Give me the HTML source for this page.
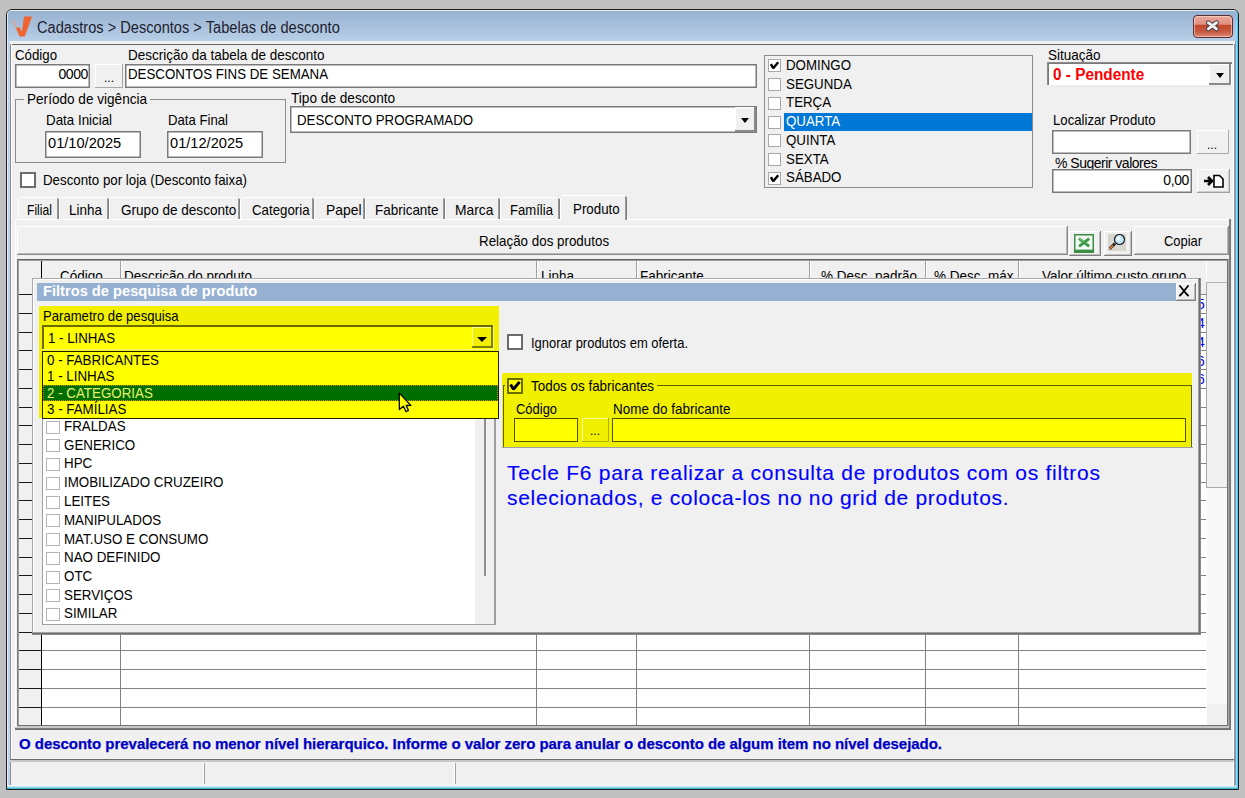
<!DOCTYPE html>
<html><head><meta charset="utf-8"><style>
html,body{margin:0;padding:0;width:1245px;height:798px;overflow:hidden;background:#c0c0c0}
.a{position:absolute}
.t{position:absolute;white-space:pre;font-family:"Liberation Sans",sans-serif;-webkit-font-smoothing:antialiased}
</style></head><body>
<div class="a" style="left:0px;top:0px;width:1245px;height:798px;background:#c0c0c0;"></div>
<div class="a" style="left:6px;top:9px;width:1233px;height:781px;box-sizing:border-box;border:1px solid #1c1c1c;border-radius:6px 6px 0 0;background:#b9d1ea;"></div>
<div class="a" style="left:7px;top:10px;width:1231px;height:779px;box-sizing:border-box;border-top:1px solid #e4ecf4;border-left:1px solid #dfe9f3;border-right:1px solid #3fc4ef;border-radius:5px 5px 0 0;"></div>
<div class="a" style="left:8px;top:11px;width:1229px;height:30px;background:linear-gradient(#97b1d0,#b8cfe8);border-radius:4px 4px 0 0;"></div>
<div class="a" style="left:1235px;top:41px;width:1px;height:745px;background:#8c96a0;"></div>
<div class="a" style="left:1236px;top:20px;width:1px;height:768px;background:#a0d0f0;"></div>
<div class="a" style="left:1237px;top:20px;width:1px;height:769px;background:#40d0ff;"></div>
<div class="a" style="left:1238px;top:20px;width:1px;height:769px;background:#102028;"></div>
<div class="a" style="left:7px;top:41px;width:1px;height:745px;background:#e4edf6;"></div>
<div class="a" style="left:8px;top:41px;width:1px;height:745px;background:#b9d1ea;"></div>
<div class="a" style="left:9px;top:41px;width:1px;height:745px;background:#c4d8ee;"></div>
<div class="a" style="left:7px;top:785px;width:1229px;height:1px;background:#fafafa;"></div>
<div class="a" style="left:7px;top:786px;width:1229px;height:1px;background:#c8e0f0;"></div>
<div class="a" style="left:7px;top:787px;width:1230px;height:1px;background:#90d8ee;"></div>
<div class="a" style="left:7px;top:788px;width:1231px;height:1px;background:#40b8d0;"></div>
<div class="a" style="left:10px;top:41px;width:1225px;height:744px;background:#f0f0f0;"></div>
<div class="a" style="left:10px;top:44px;width:1225px;height:1px;background:#646464;"></div>
<div class="a" style="left:10px;top:44px;width:1px;height:741px;background:#8a8a8a;"></div>
<div class="a" style="left:1233px;top:44px;width:1px;height:741px;background:#ffffff;"></div>
<div class="a" style="left:1234px;top:44px;width:1px;height:742px;background:#8a96a0;"></div>
<svg class="a" style="left:11px;top:15px" width="22" height="24" viewBox="0 0 22 24"><path d="M13 1.5 L21 1.5 L13.8 21.5 L8.5 21.5 L4.8 12.8 L8.6 12.2 L10.9 16.8 Z" fill="#ef6433"/><path d="M1.8 5.2 L5.2 12" stroke="#f39a78" stroke-width="1.3"/></svg>
<div class="t" style="left:37px;top:18px;font-size:16px;line-height:19px;color:#1e1e2e;letter-spacing:0px;transform:scaleX(0.9134);transform-origin:0 0;">Cadastros &gt; Descontos &gt; Tabelas de desconto</div>
<div class="a" style="left:1193px;top:15px;width:40px;height:23px;box-sizing:border-box;border:1px solid #5a2a35;border-radius:4px;background:linear-gradient(#eba89a 0%,#e09080 40%,#c0462a 42%,#c75a40 75%,#dc8a72 100%);box-shadow:inset 0 0 0 1px rgba(255,220,210,0.6);"></div>
<svg class="a" style="left:1204px;top:19px" width="18" height="15" viewBox="0 0 18 15"><path d="M4.3 3.7 L12.5 9.9 M12.5 3.7 L4.3 9.9" stroke="#3c3846" stroke-width="4.8" stroke-linecap="round"/><path d="M4.3 3.7 L12.5 9.9 M12.5 3.7 L4.3 9.9" stroke="#f2f2f2" stroke-width="2.9" stroke-linecap="round"/></svg>
<div class="t" style="left:15px;top:47px;font-size:14.5px;line-height:17px;color:#000;letter-spacing:0px;transform:scaleX(0.9153);transform-origin:0 0;">Código</div>
<div class="t" style="left:128px;top:46px;font-size:15px;line-height:18px;color:#000;letter-spacing:0px;transform:scaleX(0.8997);transform-origin:0 0;">Descrição da tabela de desconto</div>
<div class="a" style="left:15px;top:64px;width:75px;height:24px;background:#fff;box-sizing:border-box;border:1px solid #7a7a7a;box-shadow:inset 0 0 0 0.5px #7a7a7a;"></div>
<div class="t" style="left:28px;top:66px;width:60px;text-align:right;font-size:14px;line-height:17px;color:#000;letter-spacing:-0.4px;">0000</div>
<div class="a" style="left:95px;top:64px;width:28px;height:24px;background:#f0f0f0;"></div>
<div class="a" style="left:95px;top:64px;width:28px;height:1px;background:#fff;"></div>
<div class="a" style="left:95px;top:64px;width:1px;height:24px;background:#fff;"></div>
<div class="a" style="left:95px;top:87px;width:28px;height:1px;background:#a8a8a8;"></div>
<div class="a" style="left:122px;top:64px;width:1px;height:24px;background:#a8a8a8;"></div>
<div class="t" style="left:104px;top:71px;font-size:12px;line-height:14px;color:#000;letter-spacing:0px;">...</div>
<div class="a" style="left:125px;top:64px;width:632px;height:24px;background:#fff;box-sizing:border-box;border:1px solid #7a7a7a;box-shadow:inset 0 0 0 0.5px #7a7a7a;"></div>
<div class="t" style="left:128px;top:66px;font-size:14.5px;line-height:17px;color:#000;letter-spacing:0px;transform:scaleX(0.9174);transform-origin:0 0;">DESCONTOS FINS DE SEMANA</div>
<div class="a" style="left:15px;top:99px;width:271px;height:64px;box-sizing:border-box;border:1px solid #8c8c8c;"></div>
<div class="a" style="left:24px;top:93px;width:126px;height:11px;background:#f0f0f0;"></div>
<div class="t" style="left:27px;top:91px;font-size:14.5px;line-height:17px;color:#000;letter-spacing:0px;transform:scaleX(0.9369);transform-origin:0 0;">Período de vigência</div>
<div class="t" style="left:46px;top:112px;font-size:14.5px;line-height:17px;color:#000;letter-spacing:0px;transform:scaleX(0.921);transform-origin:0 0;">Data Inicial</div>
<div class="t" style="left:168px;top:112px;font-size:14.5px;line-height:17px;color:#000;letter-spacing:0px;transform:scaleX(0.9086);transform-origin:0 0;">Data Final</div>
<div class="a" style="left:45px;top:131px;width:96px;height:27px;background:#fff;box-sizing:border-box;border:1px solid #7a7a7a;box-shadow:inset 0 0 0 0.5px #7a7a7a;"></div>
<div class="t" style="left:48px;top:135px;font-size:14.5px;line-height:17px;color:#000;letter-spacing:0px;transform:scaleX(1.0081);transform-origin:0 0;">01/10/2025</div>
<div class="a" style="left:167px;top:131px;width:96px;height:27px;background:#fff;box-sizing:border-box;border:1px solid #7a7a7a;box-shadow:inset 0 0 0 0.5px #7a7a7a;"></div>
<div class="t" style="left:170px;top:135px;font-size:14.5px;line-height:17px;color:#000;letter-spacing:0px;transform:scaleX(1.0081);transform-origin:0 0;">01/12/2025</div>
<div class="t" style="left:291px;top:89px;font-size:15px;line-height:18px;color:#000;letter-spacing:0px;transform:scaleX(0.9088);transform-origin:0 0;">Tipo de desconto</div>
<div class="a" style="left:290px;top:106px;width:467px;height:27px;background:#fff;box-sizing:border-box;border:1px solid #7a7a7a;box-shadow:inset 0 0 0 0.5px #7a7a7a;"></div>
<div class="t" style="left:297px;top:111px;font-size:15px;line-height:18px;color:#000;letter-spacing:0px;transform:scaleX(0.8851);transform-origin:0 0;">DESCONTO PROGRAMADO</div>
<div class="a" style="left:735px;top:107px;width:21px;height:25px;background:#f0f0f0;"></div>
<div class="a" style="left:735px;top:107px;width:20px;height:1px;background:#ffffff;"></div>
<div class="a" style="left:735px;top:107px;width:1px;height:24px;background:#ffffff;"></div>
<div class="a" style="left:735px;top:130px;width:21px;height:2px;background:#8a8a8a;"></div>
<div class="a" style="left:754px;top:107px;width:2px;height:25px;background:#8a8a8a;"></div>
<div class="a" style="left:740.5px;top:117.5px;width:0;height:0;border-left:4.5px solid transparent;border-right:4.5px solid transparent;border-top:5px solid #000;"></div>
<div class="a" style="left:764px;top:55px;width:269px;height:133px;box-sizing:border-box;border:1px solid #8c8c8c;background:#f0f0f0;"></div>
<div class="a" style="left:768px;top:59px;width:13px;height:13px;background:#fff;box-sizing:border-box;border:1px solid #a8a8a8;"></div>
<svg class="a" style="left:768px;top:59px" width="13" height="13" viewBox="0 0 16 16"><path d="M3.6 6.4 L6.4 11.3 L12.6 3.9" fill="none" stroke="#000" stroke-width="3" stroke-linejoin="bevel"/></svg>
<div class="t" style="left:786px;top:57px;font-size:14.5px;line-height:17px;color:#000;letter-spacing:0px;transform:scaleX(0.9178);transform-origin:0 0;letter-spacing:0;transform:scaleX(0.9178);transform-origin:0 0;">DOMINGO</div>
<div class="a" style="left:768px;top:78px;width:13px;height:13px;background:#fff;box-sizing:border-box;border:1px solid #a8a8a8;"></div>
<div class="t" style="left:786px;top:76px;font-size:14.5px;line-height:17px;color:#000;letter-spacing:-0.4px;transform:scaleX(0.9178);transform-origin:0 0;letter-spacing:0;">SEGUNDA</div>
<div class="a" style="left:768px;top:97px;width:13px;height:13px;background:#fff;box-sizing:border-box;border:1px solid #a8a8a8;"></div>
<div class="t" style="left:786px;top:94px;font-size:14.5px;line-height:17px;color:#000;letter-spacing:-0.4px;transform:scaleX(0.9178);transform-origin:0 0;letter-spacing:0;">TERÇA</div>
<div class="a" style="left:784px;top:113px;width:248px;height:18px;background:#0078d7;"></div>
<div class="a" style="left:768px;top:116px;width:13px;height:13px;background:#fff;box-sizing:border-box;border:1px solid #a8a8a8;"></div>
<div class="t" style="left:786px;top:113px;font-size:14.5px;line-height:17px;color:#fff;letter-spacing:-0.4px;transform:scaleX(0.9178);transform-origin:0 0;letter-spacing:0;">QUARTA</div>
<div class="a" style="left:768px;top:134px;width:13px;height:13px;background:#fff;box-sizing:border-box;border:1px solid #a8a8a8;"></div>
<div class="t" style="left:786px;top:132px;font-size:14.5px;line-height:17px;color:#000;letter-spacing:-0.4px;transform:scaleX(0.9178);transform-origin:0 0;letter-spacing:0;">QUINTA</div>
<div class="a" style="left:768px;top:153px;width:13px;height:13px;background:#fff;box-sizing:border-box;border:1px solid #a8a8a8;"></div>
<div class="t" style="left:786px;top:151px;font-size:14.5px;line-height:17px;color:#000;letter-spacing:-0.4px;transform:scaleX(0.9178);transform-origin:0 0;letter-spacing:0;">SEXTA</div>
<div class="a" style="left:768px;top:172px;width:13px;height:13px;background:#fff;box-sizing:border-box;border:1px solid #a8a8a8;"></div>
<svg class="a" style="left:768px;top:172px" width="13" height="13" viewBox="0 0 16 16"><path d="M3.6 6.4 L6.4 11.3 L12.6 3.9" fill="none" stroke="#000" stroke-width="3" stroke-linejoin="bevel"/></svg>
<div class="t" style="left:786px;top:169px;font-size:14.5px;line-height:17px;color:#000;letter-spacing:-0.4px;transform:scaleX(0.9178);transform-origin:0 0;letter-spacing:0;">SÁBADO</div>
<div class="t" style="left:1048px;top:47px;font-size:14.5px;line-height:17px;color:#000;letter-spacing:0px;transform:scaleX(0.9317);transform-origin:0 0;">Situação</div>
<div class="a" style="left:1047px;top:62px;width:185px;height:24px;background:#ffffff;"></div>
<div class="a" style="left:1047px;top:62px;width:185px;height:1px;background:#8a8a8a;"></div>
<div class="a" style="left:1048px;top:63px;width:184px;height:1px;background:#7a7a7a;"></div>
<div class="a" style="left:1047px;top:62px;width:1px;height:24px;background:#8a8a8a;"></div>
<div class="a" style="left:1048px;top:63px;width:1px;height:22px;background:#7a7a7a;"></div>
<div class="a" style="left:1047px;top:85px;width:185px;height:1px;background:#f0f0f0;"></div>
<div class="a" style="left:1047px;top:86px;width:185px;height:1px;background:#e8e8e8;"></div>
<div class="t" style="left:1053px;top:65px;font-size:16px;line-height:19px;color:#ff0000;letter-spacing:0px;font-weight:bold;transform:scaleX(0.9589);transform-origin:0 0;">0 - Pendente</div>
<div class="a" style="left:1209px;top:64px;width:22px;height:21px;background:#f0f0f0;"></div>
<div class="a" style="left:1209px;top:64px;width:21px;height:1px;background:#ffffff;"></div>
<div class="a" style="left:1209px;top:64px;width:1px;height:20px;background:#ffffff;"></div>
<div class="a" style="left:1209px;top:83px;width:22px;height:2px;background:#8a8a8a;"></div>
<div class="a" style="left:1229px;top:64px;width:2px;height:21px;background:#8a8a8a;"></div>
<div class="a" style="left:1215.5px;top:72.5px;width:0;height:0;border-left:4.5px solid transparent;border-right:4.5px solid transparent;border-top:5px solid #000;"></div>
<div class="t" style="left:1053px;top:112px;font-size:14.5px;line-height:17px;color:#000;letter-spacing:0px;transform:scaleX(0.9088);transform-origin:0 0;">Localizar Produto</div>
<div class="a" style="left:1052px;top:130px;width:139px;height:24px;background:#fff;box-sizing:border-box;border:1px solid #7a7a7a;box-shadow:inset 0 0 0 0.5px #7a7a7a;"></div>
<div class="a" style="left:1197px;top:130px;width:32px;height:24px;background:#f0f0f0;"></div>
<div class="a" style="left:1197px;top:130px;width:32px;height:1px;background:#fff;"></div>
<div class="a" style="left:1197px;top:130px;width:1px;height:24px;background:#fff;"></div>
<div class="a" style="left:1197px;top:153px;width:32px;height:1px;background:#a8a8a8;"></div>
<div class="a" style="left:1228px;top:130px;width:1px;height:24px;background:#a8a8a8;"></div>
<div class="t" style="left:1207px;top:138px;font-size:12px;line-height:14px;color:#000;letter-spacing:0px;">...</div>
<div class="a" style="left:1052px;top:154px;width:160px;height:15px;overflow:hidden"><div class="t" style="left:3px;top:1px;font-size:14px;line-height:17px;letter-spacing:-0.5px">% Sugerir valores</div></div>
<div class="a" style="left:1052px;top:169px;width:140px;height:24px;background:#fff;box-sizing:border-box;border:1px solid #7a7a7a;box-shadow:inset 0 0 0 0.5px #7a7a7a;"></div>
<div class="t" style="left:1129px;top:172px;width:60px;text-align:right;font-size:14px;line-height:17px;color:#000;letter-spacing:-0.4px;">0,00</div>
<div class="a" style="left:1197px;top:169px;width:33px;height:24px;background:#f0f0f0;"></div>
<div class="a" style="left:1197px;top:169px;width:33px;height:1px;background:#fff;"></div>
<div class="a" style="left:1197px;top:169px;width:1px;height:24px;background:#fff;"></div>
<div class="a" style="left:1197px;top:192px;width:33px;height:1px;background:#a0a0a0;"></div>
<div class="a" style="left:1229px;top:169px;width:1px;height:24px;background:#a0a0a0;"></div>
<div class="a" style="left:1198px;top:191px;width:31px;height:1px;background:#d0d0d0;"></div>
<div class="a" style="left:1228px;top:170px;width:1px;height:22px;background:#d0d0d0;"></div>
<svg class="a" style="left:1203px;top:174px" width="22" height="14" viewBox="0 0 22 14"><path d="M1 7 H7 M5 3 L9 7 L5 11" fill="none" stroke="#000" stroke-width="2.6"/><path d="M11 1.5 H16.5 L20 5 V13 H11 Z" fill="#fff" stroke="#000" stroke-width="1.6"/></svg>
<div class="a" style="left:20px;top:172px;width:16px;height:16px;background:#fff;box-sizing:border-box;border:2px solid #6a6a6a;"></div>
<div class="t" style="left:43px;top:172px;font-size:14.5px;line-height:17px;color:#000;letter-spacing:0px;transform:scaleX(0.9173);transform-origin:0 0;">Desconto por loja (Desconto faixa)</div>
<div class="a" style="left:18px;top:197px;width:41px;height:22px;background:#f0f0f0;"></div>
<div class="a" style="left:20px;top:197px;width:37px;height:1px;background:#ffffff;"></div>
<div class="a" style="left:18px;top:199px;width:1px;height:20px;background:#ffffff;"></div>
<div class="a" style="left:57px;top:198px;width:1px;height:21px;background:#9a9a9a;"></div>
<div class="a" style="left:58px;top:199px;width:1px;height:20px;background:#7e7e7e;"></div>
<div class="t" style="left:27px;top:202px;font-size:14.5px;line-height:17px;color:#000;letter-spacing:0px;transform:scaleX(0.8341);transform-origin:0 0;">Filial</div>
<div class="a" style="left:59px;top:197px;width:50px;height:22px;background:#f0f0f0;"></div>
<div class="a" style="left:61px;top:197px;width:46px;height:1px;background:#ffffff;"></div>
<div class="a" style="left:59px;top:199px;width:1px;height:20px;background:#ffffff;"></div>
<div class="a" style="left:107px;top:198px;width:1px;height:21px;background:#9a9a9a;"></div>
<div class="a" style="left:108px;top:199px;width:1px;height:20px;background:#7e7e7e;"></div>
<div class="t" style="left:69px;top:202px;font-size:14.5px;line-height:17px;color:#000;letter-spacing:0px;transform:scaleX(0.9265);transform-origin:0 0;">Linha</div>
<div class="a" style="left:109px;top:197px;width:131px;height:22px;background:#f0f0f0;"></div>
<div class="a" style="left:111px;top:197px;width:127px;height:1px;background:#ffffff;"></div>
<div class="a" style="left:109px;top:199px;width:1px;height:20px;background:#ffffff;"></div>
<div class="a" style="left:238px;top:198px;width:1px;height:21px;background:#9a9a9a;"></div>
<div class="a" style="left:239px;top:199px;width:1px;height:20px;background:#7e7e7e;"></div>
<div class="t" style="left:121px;top:202px;font-size:14.5px;line-height:17px;color:#000;letter-spacing:0px;transform:scaleX(0.9347);transform-origin:0 0;">Grupo de desconto</div>
<div class="a" style="left:240px;top:197px;width:74px;height:22px;background:#f0f0f0;"></div>
<div class="a" style="left:242px;top:197px;width:70px;height:1px;background:#ffffff;"></div>
<div class="a" style="left:240px;top:199px;width:1px;height:20px;background:#ffffff;"></div>
<div class="a" style="left:312px;top:198px;width:1px;height:21px;background:#9a9a9a;"></div>
<div class="a" style="left:313px;top:199px;width:1px;height:20px;background:#7e7e7e;"></div>
<div class="t" style="left:252px;top:202px;font-size:14.5px;line-height:17px;color:#000;letter-spacing:0px;transform:scaleX(0.9155);transform-origin:0 0;">Categoria</div>
<div class="a" style="left:314px;top:197px;width:51px;height:22px;background:#f0f0f0;"></div>
<div class="a" style="left:316px;top:197px;width:47px;height:1px;background:#ffffff;"></div>
<div class="a" style="left:314px;top:199px;width:1px;height:20px;background:#ffffff;"></div>
<div class="a" style="left:363px;top:198px;width:1px;height:21px;background:#9a9a9a;"></div>
<div class="a" style="left:364px;top:199px;width:1px;height:20px;background:#7e7e7e;"></div>
<div class="t" style="left:326px;top:202px;font-size:14.5px;line-height:17px;color:#000;letter-spacing:0px;transform:scaleX(0.9573);transform-origin:0 0;">Papel</div>
<div class="a" style="left:365px;top:197px;width:80px;height:22px;background:#f0f0f0;"></div>
<div class="a" style="left:367px;top:197px;width:76px;height:1px;background:#ffffff;"></div>
<div class="a" style="left:365px;top:199px;width:1px;height:20px;background:#ffffff;"></div>
<div class="a" style="left:443px;top:198px;width:1px;height:21px;background:#9a9a9a;"></div>
<div class="a" style="left:444px;top:199px;width:1px;height:20px;background:#7e7e7e;"></div>
<div class="t" style="left:375px;top:202px;font-size:14.5px;line-height:17px;color:#000;letter-spacing:0px;transform:scaleX(0.9279);transform-origin:0 0;">Fabricante</div>
<div class="a" style="left:445px;top:197px;width:55px;height:22px;background:#f0f0f0;"></div>
<div class="a" style="left:447px;top:197px;width:51px;height:1px;background:#ffffff;"></div>
<div class="a" style="left:445px;top:199px;width:1px;height:20px;background:#ffffff;"></div>
<div class="a" style="left:498px;top:198px;width:1px;height:21px;background:#9a9a9a;"></div>
<div class="a" style="left:499px;top:199px;width:1px;height:20px;background:#7e7e7e;"></div>
<div class="t" style="left:455px;top:202px;font-size:14.5px;line-height:17px;color:#000;letter-spacing:0px;transform:scaleX(0.9531);transform-origin:0 0;">Marca</div>
<div class="a" style="left:500px;top:197px;width:60px;height:22px;background:#f0f0f0;"></div>
<div class="a" style="left:502px;top:197px;width:56px;height:1px;background:#ffffff;"></div>
<div class="a" style="left:500px;top:199px;width:1px;height:20px;background:#ffffff;"></div>
<div class="a" style="left:558px;top:198px;width:1px;height:21px;background:#9a9a9a;"></div>
<div class="a" style="left:559px;top:199px;width:1px;height:20px;background:#7e7e7e;"></div>
<div class="t" style="left:510px;top:202px;font-size:14.5px;line-height:17px;color:#000;letter-spacing:0px;transform:scaleX(0.9033);transform-origin:0 0;">Família</div>
<div class="a" style="left:560px;top:195px;width:67px;height:26px;background:#f0f0f0;"></div>
<div class="a" style="left:562px;top:195px;width:63px;height:1px;background:#ffffff;"></div>
<div class="a" style="left:560px;top:197px;width:1px;height:23px;background:#ffffff;"></div>
<div class="a" style="left:625px;top:196px;width:1px;height:24px;background:#9a9a9a;"></div>
<div class="a" style="left:626px;top:197px;width:1px;height:23px;background:#7e7e7e;"></div>
<div class="t" style="left:573px;top:201px;font-size:14.5px;line-height:17px;color:#000;letter-spacing:0px;transform:scaleX(0.9187);transform-origin:0 0;">Produto</div>
<div class="a" style="left:15px;top:219px;width:545px;height:1px;background:#ffffff;"></div>
<div class="a" style="left:627px;top:219px;width:602px;height:1px;background:#ffffff;"></div>
<div class="a" style="left:15px;top:219px;width:1px;height:510px;background:#ffffff;"></div>
<div class="a" style="left:1229px;top:219px;width:1px;height:511px;background:#8a8a8a;"></div>
<div class="a" style="left:1230px;top:219px;width:1px;height:511px;background:#6e6e6e;"></div>
<div class="a" style="left:15px;top:728px;width:1216px;height:1px;background:#b0b0b0;"></div>
<div class="a" style="left:15px;top:729px;width:1216px;height:1px;background:#6e6e6e;"></div>
<div class="a" style="left:17px;top:226px;width:1051px;height:29px;background:#f0f0f0;"></div>
<div class="a" style="left:17px;top:226px;width:1051px;height:1px;background:#fff;"></div>
<div class="a" style="left:17px;top:226px;width:1px;height:29px;background:#fff;"></div>
<div class="a" style="left:17px;top:254px;width:1051px;height:1px;background:#8a8a8a;"></div>
<div class="a" style="left:1067px;top:226px;width:1px;height:29px;background:#8a8a8a;"></div>
<div class="a" style="left:18px;top:253px;width:1049px;height:1px;background:#b8b8b8;"></div>
<div class="a" style="left:1066px;top:227px;width:1px;height:27px;background:#b8b8b8;"></div>
<div class="t" style="left:479px;top:233px;font-size:14.5px;line-height:17px;color:#000;letter-spacing:0px;transform:scaleX(0.922);transform-origin:0 0;">Relação dos produtos</div>
<div class="a" style="left:1069px;top:231px;width:32px;height:25px;background:#f0f0f0;"></div>
<div class="a" style="left:1069px;top:231px;width:32px;height:1px;background:#fff;"></div>
<div class="a" style="left:1069px;top:231px;width:1px;height:25px;background:#fff;"></div>
<div class="a" style="left:1069px;top:255px;width:32px;height:1px;background:#808080;"></div>
<div class="a" style="left:1100px;top:231px;width:1px;height:25px;background:#808080;"></div>
<div class="a" style="left:1070px;top:254px;width:30px;height:1px;background:#c0c0c0;"></div>
<div class="a" style="left:1099px;top:232px;width:1px;height:23px;background:#c0c0c0;"></div>
<div class="a" style="left:1104px;top:231px;width:28px;height:25px;background:#f0f0f0;"></div>
<div class="a" style="left:1104px;top:231px;width:28px;height:1px;background:#fff;"></div>
<div class="a" style="left:1104px;top:231px;width:1px;height:25px;background:#fff;"></div>
<div class="a" style="left:1104px;top:255px;width:28px;height:1px;background:#808080;"></div>
<div class="a" style="left:1131px;top:231px;width:1px;height:25px;background:#808080;"></div>
<div class="a" style="left:1105px;top:254px;width:26px;height:1px;background:#c0c0c0;"></div>
<div class="a" style="left:1130px;top:232px;width:1px;height:23px;background:#c0c0c0;"></div>
<div class="a" style="left:1134px;top:226px;width:95px;height:29px;background:#f0f0f0;"></div>
<div class="a" style="left:1134px;top:226px;width:95px;height:1px;background:#fff;"></div>
<div class="a" style="left:1134px;top:226px;width:1px;height:29px;background:#fff;"></div>
<div class="a" style="left:1134px;top:254px;width:95px;height:1px;background:#8a8a8a;"></div>
<div class="a" style="left:1228px;top:226px;width:1px;height:29px;background:#8a8a8a;"></div>
<div class="a" style="left:1135px;top:253px;width:93px;height:1px;background:#b8b8b8;"></div>
<div class="a" style="left:1227px;top:227px;width:1px;height:27px;background:#b8b8b8;"></div>
<div class="t" style="left:1164px;top:233px;font-size:14.5px;line-height:17px;color:#000;letter-spacing:0px;transform:scaleX(0.8903);transform-origin:0 0;">Copiar</div>
<svg class="a" style="left:1074px;top:234px" width="20" height="19" viewBox="0 0 20 19"><rect x="0.75" y="0.75" width="18.5" height="17.5" fill="#f2f8f2" stroke="#3d8c47" stroke-width="1.5"/><rect x="1" y="15.6" width="18" height="3" fill="#3d8c47"/><path d="M5 4.6 L15.2 12.4 M15.2 4.6 L5 12.4" stroke="#3a9c46" stroke-width="2.9"/><path d="M6 4.8 L9.5 7.6" stroke="#9ad4a2" stroke-width="0.9"/></svg>
<svg class="a" style="left:1108px;top:234px" width="18" height="17" viewBox="0 0 18 17"><rect x="0" y="0" width="18" height="17" fill="#d9d5cf"/><path d="M1.5 15 L7 9.5" stroke="#222" stroke-width="2.8"/><path d="M1.5 15 L5 11.5" stroke="#f08a3a" stroke-width="1.6"/><circle cx="11.5" cy="5.5" r="5" fill="#bfe6fb" stroke="#1b1b1b" stroke-width="1.2"/><circle cx="10.5" cy="4.5" r="2.3" fill="#eefaff"/></svg>
<div class="a" style="left:17px;top:259px;width:1210px;height:466px;background:#ffffff;"></div>
<div class="a" style="left:19px;top:260px;width:1208px;height:34px;background:#f0f0f0;"></div>
<div class="a" style="left:19px;top:294px;width:22px;height:431px;background:#f0f0f0;"></div>
<div class="a" style="left:41px;top:260px;width:1px;height:465px;background:#000000;"></div>
<div class="a" style="left:120px;top:260px;width:1px;height:34px;background:#a0a0a0;"></div>
<div class="a" style="left:121px;top:260px;width:1px;height:34px;background:#ffffff;"></div>
<div class="a" style="left:536px;top:260px;width:1px;height:34px;background:#a0a0a0;"></div>
<div class="a" style="left:537px;top:260px;width:1px;height:34px;background:#ffffff;"></div>
<div class="a" style="left:636px;top:260px;width:1px;height:34px;background:#a0a0a0;"></div>
<div class="a" style="left:637px;top:260px;width:1px;height:34px;background:#ffffff;"></div>
<div class="a" style="left:809px;top:260px;width:1px;height:34px;background:#a0a0a0;"></div>
<div class="a" style="left:810px;top:260px;width:1px;height:34px;background:#ffffff;"></div>
<div class="a" style="left:925px;top:260px;width:1px;height:34px;background:#a0a0a0;"></div>
<div class="a" style="left:926px;top:260px;width:1px;height:34px;background:#ffffff;"></div>
<div class="a" style="left:1018px;top:260px;width:1px;height:34px;background:#a0a0a0;"></div>
<div class="a" style="left:1019px;top:260px;width:1px;height:34px;background:#ffffff;"></div>
<div class="a" style="left:1206px;top:260px;width:1px;height:21px;background:#ffffff;"></div>
<div class="a" style="left:19px;top:294px;width:1187px;height:1px;background:#a0a0a0;"></div>
<div class="a" style="left:19px;top:294px;width:22px;height:1px;background:#1a1a1a;"></div>
<div class="a" style="left:42px;top:294px;width:1164px;height:1px;background:#828282;"></div>
<div class="a" style="left:19px;top:313px;width:22px;height:1px;background:#1a1a1a;"></div>
<div class="a" style="left:42px;top:313px;width:1164px;height:1px;background:#828282;"></div>
<div class="a" style="left:19px;top:332px;width:22px;height:1px;background:#1a1a1a;"></div>
<div class="a" style="left:42px;top:332px;width:1164px;height:1px;background:#828282;"></div>
<div class="a" style="left:19px;top:350px;width:22px;height:1px;background:#1a1a1a;"></div>
<div class="a" style="left:42px;top:350px;width:1164px;height:1px;background:#828282;"></div>
<div class="a" style="left:19px;top:369px;width:22px;height:1px;background:#1a1a1a;"></div>
<div class="a" style="left:42px;top:369px;width:1164px;height:1px;background:#828282;"></div>
<div class="a" style="left:19px;top:388px;width:22px;height:1px;background:#1a1a1a;"></div>
<div class="a" style="left:42px;top:388px;width:1164px;height:1px;background:#828282;"></div>
<div class="a" style="left:19px;top:407px;width:22px;height:1px;background:#1a1a1a;"></div>
<div class="a" style="left:42px;top:407px;width:1164px;height:1px;background:#828282;"></div>
<div class="a" style="left:19px;top:425px;width:22px;height:1px;background:#1a1a1a;"></div>
<div class="a" style="left:42px;top:425px;width:1164px;height:1px;background:#828282;"></div>
<div class="a" style="left:19px;top:444px;width:22px;height:1px;background:#1a1a1a;"></div>
<div class="a" style="left:42px;top:444px;width:1164px;height:1px;background:#828282;"></div>
<div class="a" style="left:19px;top:463px;width:22px;height:1px;background:#1a1a1a;"></div>
<div class="a" style="left:42px;top:463px;width:1164px;height:1px;background:#828282;"></div>
<div class="a" style="left:19px;top:482px;width:22px;height:1px;background:#1a1a1a;"></div>
<div class="a" style="left:42px;top:482px;width:1164px;height:1px;background:#828282;"></div>
<div class="a" style="left:19px;top:500px;width:22px;height:1px;background:#1a1a1a;"></div>
<div class="a" style="left:42px;top:500px;width:1164px;height:1px;background:#828282;"></div>
<div class="a" style="left:19px;top:519px;width:22px;height:1px;background:#1a1a1a;"></div>
<div class="a" style="left:42px;top:519px;width:1164px;height:1px;background:#828282;"></div>
<div class="a" style="left:19px;top:538px;width:22px;height:1px;background:#1a1a1a;"></div>
<div class="a" style="left:42px;top:538px;width:1164px;height:1px;background:#828282;"></div>
<div class="a" style="left:19px;top:557px;width:22px;height:1px;background:#1a1a1a;"></div>
<div class="a" style="left:42px;top:557px;width:1164px;height:1px;background:#828282;"></div>
<div class="a" style="left:19px;top:575px;width:22px;height:1px;background:#1a1a1a;"></div>
<div class="a" style="left:42px;top:575px;width:1164px;height:1px;background:#828282;"></div>
<div class="a" style="left:19px;top:594px;width:22px;height:1px;background:#1a1a1a;"></div>
<div class="a" style="left:42px;top:594px;width:1164px;height:1px;background:#828282;"></div>
<div class="a" style="left:19px;top:613px;width:22px;height:1px;background:#1a1a1a;"></div>
<div class="a" style="left:42px;top:613px;width:1164px;height:1px;background:#828282;"></div>
<div class="a" style="left:19px;top:632px;width:22px;height:1px;background:#1a1a1a;"></div>
<div class="a" style="left:42px;top:632px;width:1164px;height:1px;background:#828282;"></div>
<div class="a" style="left:19px;top:650px;width:22px;height:1px;background:#1a1a1a;"></div>
<div class="a" style="left:42px;top:650px;width:1164px;height:1px;background:#828282;"></div>
<div class="a" style="left:19px;top:669px;width:22px;height:1px;background:#1a1a1a;"></div>
<div class="a" style="left:42px;top:669px;width:1164px;height:1px;background:#828282;"></div>
<div class="a" style="left:19px;top:688px;width:22px;height:1px;background:#1a1a1a;"></div>
<div class="a" style="left:42px;top:688px;width:1164px;height:1px;background:#828282;"></div>
<div class="a" style="left:19px;top:707px;width:22px;height:1px;background:#1a1a1a;"></div>
<div class="a" style="left:42px;top:707px;width:1164px;height:1px;background:#828282;"></div>
<div class="a" style="left:120px;top:294px;width:1px;height:431px;background:#828282;"></div>
<div class="a" style="left:536px;top:294px;width:1px;height:431px;background:#828282;"></div>
<div class="a" style="left:636px;top:294px;width:1px;height:431px;background:#828282;"></div>
<div class="a" style="left:809px;top:294px;width:1px;height:431px;background:#828282;"></div>
<div class="a" style="left:925px;top:294px;width:1px;height:431px;background:#828282;"></div>
<div class="a" style="left:1018px;top:294px;width:1px;height:431px;background:#828282;"></div>
<div class="t" style="left:60px;top:268px;font-size:14.5px;line-height:17px;color:#000;letter-spacing:-0.4px;transform:scaleX(0.9293);transform-origin:0 0;letter-spacing:0;">Código</div>
<div class="t" style="left:124px;top:268px;font-size:14.5px;line-height:17px;color:#000;letter-spacing:-0.4px;transform:scaleX(0.9293);transform-origin:0 0;letter-spacing:0;">Descrição do produto</div>
<div class="t" style="left:541px;top:268px;font-size:14.5px;line-height:17px;color:#000;letter-spacing:-0.4px;transform:scaleX(0.9293);transform-origin:0 0;letter-spacing:0;">Linha</div>
<div class="t" style="left:640px;top:268px;font-size:14.5px;line-height:17px;color:#000;letter-spacing:-0.4px;transform:scaleX(0.9293);transform-origin:0 0;letter-spacing:0;">Fabricante</div>
<div class="t" style="left:821px;top:268px;font-size:14.5px;line-height:17px;color:#000;letter-spacing:-0.4px;transform:scaleX(0.9293);transform-origin:0 0;letter-spacing:0;">% Desc. padrão</div>
<div class="t" style="left:934px;top:268px;font-size:14.5px;line-height:17px;color:#000;letter-spacing:-0.4px;transform:scaleX(0.9293);transform-origin:0 0;letter-spacing:0;">% Desc. máx</div>
<div class="t" style="left:1042px;top:268px;font-size:14.5px;line-height:17px;color:#000;letter-spacing:-0.4px;transform:scaleX(0.9293);transform-origin:0 0;letter-spacing:0;">Valor último custo grupo</div>
<div class="a" style="left:1206px;top:281px;width:21px;height:207px;background:#f0f0f0;"></div>
<div class="a" style="left:1206px;top:282px;width:1px;height:206px;background:#a8a8a8;"></div>
<div class="a" style="left:1206px;top:487px;width:21px;height:1px;background:#a8a8a8;"></div>
<div class="a" style="left:1206px;top:282px;width:21px;height:1px;background:#b4b4b4;"></div>
<div class="a" style="left:1207px;top:488px;width:20px;height:216px;background-color:#f4f4f4;background-image:linear-gradient(45deg,#fcfcfc 25%,transparent 25%,transparent 75%,#fcfcfc 75%),linear-gradient(45deg,#fcfcfc 25%,transparent 25%,transparent 75%,#fcfcfc 75%);background-size:2px 2px;background-position:0 0,1px 1px;"></div>
<div class="a" style="left:1207px;top:704px;width:20px;height:21px;background:#f0f0f0;"></div>
<div class="a" style="left:17px;top:259px;width:1210px;height:1px;background:#606060;"></div>
<div class="a" style="left:19px;top:260px;width:1208px;height:1px;background:#a0a0a0;"></div>
<div class="a" style="left:17px;top:259px;width:1px;height:467px;background:#7a7a7a;"></div>
<div class="a" style="left:18px;top:260px;width:1px;height:465px;background:#a0a0a0;"></div>
<div class="a" style="left:1227px;top:259px;width:1px;height:467px;background:#707070;"></div>
<div class="a" style="left:1228px;top:259px;width:1px;height:468px;background:#a8a8a8;"></div>
<div class="a" style="left:1229px;top:219px;width:1px;height:511px;background:#808080;"></div>
<div class="a" style="left:1230px;top:219px;width:1px;height:511px;background:#787878;"></div>
<div class="a" style="left:17px;top:725px;width:1211px;height:1px;background:#707070;"></div>
<div class="a" style="left:17px;top:726px;width:1212px;height:1px;background:#c8c8c8;"></div>
<div class="a" style="left:15px;top:727px;width:1214px;height:1px;background:#c8c8c8;"></div>
<div class="a" style="left:15px;top:728px;width:1216px;height:1px;background:#7a7a7a;"></div>
<div class="a" style="left:15px;top:729px;width:1216px;height:1px;background:#707070;"></div>
<div class="t" style="left:1197px;top:296px;font-size:14px;line-height:17px;color:#0000ff;letter-spacing:0px;">5</div>
<div class="t" style="left:1197px;top:315px;font-size:14px;line-height:17px;color:#0000ff;letter-spacing:0px;">4</div>
<div class="t" style="left:1197px;top:334px;font-size:14px;line-height:17px;color:#0000ff;letter-spacing:0px;">4</div>
<div class="t" style="left:1197px;top:353px;font-size:14px;line-height:17px;color:#0000ff;letter-spacing:0px;">6</div>
<div class="t" style="left:1197px;top:371px;font-size:14px;line-height:17px;color:#0000ff;letter-spacing:0px;">6</div>
<div class="a" style="left:32px;top:278px;width:1169px;height:357px;background:#f0f0f0;"></div>
<div class="a" style="left:32px;top:278px;width:1169px;height:1px;background:#a8a8a8;"></div>
<div class="a" style="left:32px;top:278px;width:1px;height:357px;background:#a8a8a8;"></div>
<div class="a" style="left:33px;top:279px;width:1166px;height:1px;background:#ffffff;"></div>
<div class="a" style="left:33px;top:279px;width:1px;height:354px;background:#ffffff;"></div>
<div class="a" style="left:1198px;top:279px;width:1px;height:355px;background:#a0a0a0;"></div>
<div class="a" style="left:1199px;top:278px;width:1px;height:357px;background:#6e6e6e;"></div>
<div class="a" style="left:1200px;top:278px;width:1px;height:357px;background:#8a8a8a;"></div>
<div class="a" style="left:33px;top:632px;width:1166px;height:1px;background:#a0a0a0;"></div>
<div class="a" style="left:32px;top:633px;width:1169px;height:1px;background:#6e6e6e;"></div>
<div class="a" style="left:32px;top:634px;width:1169px;height:1px;background:#8a8a8a;"></div>
<div class="a" style="left:37px;top:283px;width:1139px;height:18px;background:#97b1d2;"></div>
<div class="t" style="left:43px;top:282px;font-size:15px;line-height:18px;color:#ffffff;letter-spacing:0px;font-weight:bold;transform:scaleX(0.9771);transform-origin:0 0;">Filtros de pesquisa de produto</div>
<div class="a" style="left:1176px;top:283px;width:20px;height:18px;background:#f0f0f0;"></div>
<div class="a" style="left:1176px;top:283px;width:20px;height:1px;background:#ffffff;"></div>
<div class="a" style="left:1176px;top:283px;width:1px;height:18px;background:#ffffff;"></div>
<div class="a" style="left:1176px;top:300px;width:20px;height:1px;background:#808080;"></div>
<div class="a" style="left:1195px;top:283px;width:1px;height:18px;background:#808080;"></div>
<div class="a" style="left:1177px;top:299px;width:18px;height:1px;background:#b8b8b8;"></div>
<div class="a" style="left:1194px;top:284px;width:1px;height:16px;background:#b8b8b8;"></div>
<svg class="a" style="left:1179px;top:285px" width="12" height="12" viewBox="0 0 12 12"><path d="M1 1 Q3.5 4 5 6 Q6.5 4 9 1 M1 10.5 Q3.5 8 5 6 Q6.5 8 9 10.5" fill="none" stroke="#000" stroke-width="1.8" stroke-linecap="round"/></svg>
<div class="a" style="left:39px;top:306px;width:460px;height:112px;background:#f0f000;"></div>
<div class="t" style="left:43px;top:308px;font-size:14.5px;line-height:17px;color:#000;letter-spacing:0px;transform:scaleX(0.9041);transform-origin:0 0;">Parametro de pesquisa</div>
<div class="a" style="left:42px;top:325px;width:452px;height:25px;background:#ffff00;"></div>
<div class="a" style="left:42px;top:325px;width:452px;height:2px;background:#6b6b00;"></div>
<div class="a" style="left:42px;top:325px;width:2px;height:25px;background:#6b6b00;"></div>
<div class="a" style="left:42px;top:349px;width:452px;height:1px;background:#f8f880;"></div>
<div class="a" style="left:493px;top:325px;width:1px;height:25px;background:#f8f880;"></div>
<div class="t" style="left:48px;top:330px;font-size:14.5px;line-height:17px;color:#000;letter-spacing:0px;transform:scaleX(0.9143);transform-origin:0 0;">1 - LINHAS</div>
<div class="a" style="left:472px;top:327px;width:21px;height:21px;background:#f0f000;"></div>
<div class="a" style="left:472px;top:327px;width:21px;height:1px;background:#ffff90;"></div>
<div class="a" style="left:472px;top:327px;width:1px;height:21px;background:#ffff90;"></div>
<div class="a" style="left:472px;top:346px;width:21px;height:2px;background:#808000;"></div>
<div class="a" style="left:491px;top:327px;width:2px;height:21px;background:#808000;"></div>
<div class="a" style="left:477.0px;top:336.5px;width:0;height:0;border-left:5.0px solid transparent;border-right:5.0px solid transparent;border-top:5px solid #000;"></div>
<div class="a" style="left:42px;top:351px;width:457px;height:68px;background:#ffff00;box-sizing:border-box;border:1px solid #202000;"></div>
<div class="t" style="left:47px;top:352px;font-size:14.5px;line-height:17px;color:#000;letter-spacing:-0.4px;transform:scaleX(0.9206);transform-origin:0 0;letter-spacing:0;">0 - FABRICANTES</div>
<div class="t" style="left:47px;top:368px;font-size:14.5px;line-height:17px;color:#000;letter-spacing:-0.4px;transform:scaleX(0.9206);transform-origin:0 0;letter-spacing:0;">1 - LINHAS</div>
<div class="a" style="left:43px;top:385px;width:455px;height:16px;background:#006f00;box-sizing:border-box;border:1px dotted #d08a10;"></div>
<div class="t" style="left:47px;top:385px;font-size:14.5px;line-height:17px;color:#e8f070;letter-spacing:-0.4px;transform:scaleX(0.9206);transform-origin:0 0;letter-spacing:0;">2 - CATEGORIAS</div>
<div class="t" style="left:47px;top:401px;font-size:14.5px;line-height:17px;color:#000;letter-spacing:-0.4px;transform:scaleX(0.9206);transform-origin:0 0;letter-spacing:0;">3 - FAMÍLIAS</div>
<div class="a" style="left:42px;top:419px;width:454px;height:206px;background:#ffffff;"></div>
<div class="a" style="left:42px;top:419px;width:1px;height:206px;background:#a0a0a0;"></div>
<div class="a" style="left:494px;top:419px;width:2px;height:206px;background:#a0a0a0;"></div>
<div class="a" style="left:42px;top:624px;width:454px;height:1px;background:#a0a0a0;"></div>
<div class="a" style="left:475px;top:419px;width:19px;height:205px;background:#f0f0f0;"></div>
<div class="a" style="left:484px;top:419px;width:2px;height:157px;background:#8f8f8f;"></div>
<div class="a" style="left:46px;top:421px;width:14px;height:13px;background:#fff;box-sizing:border-box;border:1px solid #b4b4b4;"></div>
<div class="t" style="left:64px;top:418px;font-size:14.5px;line-height:17px;color:#000;letter-spacing:-0.4px;transform:scaleX(0.9206);transform-origin:0 0;letter-spacing:0;">FRALDAS</div>
<div class="a" style="left:46px;top:439px;width:14px;height:13px;background:#fff;box-sizing:border-box;border:1px solid #b4b4b4;"></div>
<div class="t" style="left:64px;top:437px;font-size:14.5px;line-height:17px;color:#000;letter-spacing:-0.4px;transform:scaleX(0.9206);transform-origin:0 0;letter-spacing:0;">GENERICO</div>
<div class="a" style="left:46px;top:458px;width:14px;height:13px;background:#fff;box-sizing:border-box;border:1px solid #b4b4b4;"></div>
<div class="t" style="left:64px;top:455px;font-size:14.5px;line-height:17px;color:#000;letter-spacing:-0.4px;transform:scaleX(0.9206);transform-origin:0 0;letter-spacing:0;">HPC</div>
<div class="a" style="left:46px;top:477px;width:14px;height:13px;background:#fff;box-sizing:border-box;border:1px solid #b4b4b4;"></div>
<div class="t" style="left:64px;top:474px;font-size:14.5px;line-height:17px;color:#000;letter-spacing:-0.4px;transform:scaleX(0.9206);transform-origin:0 0;letter-spacing:0;">IMOBILIZADO CRUZEIRO</div>
<div class="a" style="left:46px;top:496px;width:14px;height:13px;background:#fff;box-sizing:border-box;border:1px solid #b4b4b4;"></div>
<div class="t" style="left:64px;top:493px;font-size:14.5px;line-height:17px;color:#000;letter-spacing:-0.4px;transform:scaleX(0.9206);transform-origin:0 0;letter-spacing:0;">LEITES</div>
<div class="a" style="left:46px;top:514px;width:14px;height:13px;background:#fff;box-sizing:border-box;border:1px solid #b4b4b4;"></div>
<div class="t" style="left:64px;top:512px;font-size:14.5px;line-height:17px;color:#000;letter-spacing:-0.4px;transform:scaleX(0.9206);transform-origin:0 0;letter-spacing:0;">MANIPULADOS</div>
<div class="a" style="left:46px;top:533px;width:14px;height:13px;background:#fff;box-sizing:border-box;border:1px solid #b4b4b4;"></div>
<div class="t" style="left:64px;top:531px;font-size:14.5px;line-height:17px;color:#000;letter-spacing:-0.4px;transform:scaleX(0.9206);transform-origin:0 0;letter-spacing:0;">MAT.USO E CONSUMO</div>
<div class="a" style="left:46px;top:552px;width:14px;height:13px;background:#fff;box-sizing:border-box;border:1px solid #b4b4b4;"></div>
<div class="t" style="left:64px;top:549px;font-size:14.5px;line-height:17px;color:#000;letter-spacing:-0.4px;transform:scaleX(0.9206);transform-origin:0 0;letter-spacing:0;">NAO DEFINIDO</div>
<div class="a" style="left:46px;top:571px;width:14px;height:13px;background:#fff;box-sizing:border-box;border:1px solid #b4b4b4;"></div>
<div class="t" style="left:64px;top:568px;font-size:14.5px;line-height:17px;color:#000;letter-spacing:-0.4px;transform:scaleX(0.9206);transform-origin:0 0;letter-spacing:0;">OTC</div>
<div class="a" style="left:46px;top:589px;width:14px;height:13px;background:#fff;box-sizing:border-box;border:1px solid #b4b4b4;"></div>
<div class="t" style="left:64px;top:587px;font-size:14.5px;line-height:17px;color:#000;letter-spacing:-0.4px;transform:scaleX(0.9206);transform-origin:0 0;letter-spacing:0;">SERVIÇOS</div>
<div class="a" style="left:46px;top:608px;width:14px;height:13px;background:#fff;box-sizing:border-box;border:1px solid #b4b4b4;"></div>
<div class="t" style="left:64px;top:605px;font-size:14.5px;line-height:17px;color:#000;letter-spacing:-0.4px;transform:scaleX(0.9206);transform-origin:0 0;letter-spacing:0;">SIMILAR</div>
<div class="a" style="left:507px;top:334px;width:16px;height:16px;background:#fff;box-sizing:border-box;border:2px solid #6a6a6a;"></div>
<div class="t" style="left:531px;top:335px;font-size:14.5px;line-height:17px;color:#000;letter-spacing:0px;transform:scaleX(0.8937);transform-origin:0 0;">Ignorar produtos em oferta.</div>
<div class="a" style="left:502px;top:373px;width:690px;height:75px;background:#f0f000;"></div>
<div class="a" style="left:502px;top:447px;width:691px;height:1px;background:#a0a0a0;"></div>
<div class="a" style="left:503px;top:385px;width:689px;height:1px;background:#5e5e00;"></div>
<div class="a" style="left:503px;top:385px;width:1px;height:62px;background:#5e5e00;"></div>
<div class="a" style="left:1191px;top:385px;width:1px;height:62px;background:#5e5e00;"></div>
<div class="a" style="left:505px;top:376px;width:152px;height:19px;background:#f0f000;"></div>
<div class="a" style="left:507px;top:378px;width:16px;height:16px;background:#ffff00;box-sizing:border-box;border:2px solid #6b6b00;"></div>
<svg class="a" style="left:507px;top:378px" width="16" height="16" viewBox="0 0 16 16"><path d="M3.6 6.4 L6.4 11.3 L12.6 3.9" fill="none" stroke="#000" stroke-width="3" stroke-linejoin="bevel"/></svg>
<div class="t" style="left:531px;top:378px;font-size:14.5px;line-height:17px;color:#000;letter-spacing:0px;transform:scaleX(0.9254);transform-origin:0 0;">Todos os fabricantes</div>
<div class="t" style="left:516px;top:401px;font-size:14.5px;line-height:17px;color:#000;letter-spacing:0px;transform:scaleX(0.893);transform-origin:0 0;">Código</div>
<div class="t" style="left:613px;top:401px;font-size:14.5px;line-height:17px;color:#000;letter-spacing:0px;transform:scaleX(0.9275);transform-origin:0 0;">Nome do fabricante</div>
<div class="a" style="left:514px;top:418px;width:64px;height:24px;background:#ffff00;box-sizing:border-box;border:1px solid #505000;"></div>
<div class="a" style="left:582px;top:418px;width:27px;height:24px;background:#f0f000;"></div>
<div class="a" style="left:582px;top:418px;width:27px;height:1px;background:#ffff90;"></div>
<div class="a" style="left:582px;top:418px;width:1px;height:24px;background:#ffff90;"></div>
<div class="a" style="left:582px;top:441px;width:27px;height:1px;background:#b0b000;"></div>
<div class="a" style="left:608px;top:418px;width:1px;height:24px;background:#b0b000;"></div>
<div class="t" style="left:590px;top:424px;font-size:12px;line-height:14px;color:#000;letter-spacing:0px;">...</div>
<div class="a" style="left:612px;top:418px;width:574px;height:24px;background:#ffff00;box-sizing:border-box;border:1px solid #505000;"></div>
<div class="t" style="left:507px;top:460px;font-size:21px;line-height:25px;color:#0000ff;letter-spacing:0.733px;-webkit-text-stroke:0.12px #0000ff;">Tecle F6 para realizar a consulta de produtos com os filtros</div>
<div class="t" style="left:507px;top:485px;font-size:21px;line-height:25px;color:#0000ff;letter-spacing:0.681px;-webkit-text-stroke:0.12px #0000ff;">selecionados, e coloca-los no no grid de produtos.</div>
<svg class="a" style="left:398px;top:392px" width="15" height="22" viewBox="0 0 15 22"><path d="M1.2 1.1 L1.4 17.6 L5.4 14.2 L7.9 19.6 L10.5 18.5 L8.2 13.5 L12.9 13.4 Z" fill="#ffff00" stroke="#000" stroke-width="1.3" stroke-linejoin="round"/></svg>
<div class="t" style="left:19px;top:735px;font-size:15px;line-height:18px;color:#0000c4;letter-spacing:-0.031px;font-weight:bold;-webkit-text-stroke:0.25px #0000c4;">O desconto prevalecerá no menor nível hierarquico. Informe o valor zero para anular o desconto de algum item no nível desejado.</div>
<div class="a" style="left:10px;top:759px;width:1224px;height:1px;background:#6a6a6a;"></div>
<div class="a" style="left:10px;top:760px;width:1224px;height:1px;background:#c8c8c8;"></div>
<div class="a" style="left:10px;top:761px;width:1224px;height:1px;background:#c8c8c8;"></div>
<div class="a" style="left:11px;top:44px;width:1px;height:715px;background:#ffffff;"></div>
<div class="a" style="left:203px;top:763px;width:1px;height:21px;background:#ffffff;"></div>
<div class="a" style="left:204px;top:763px;width:1px;height:21px;background:#a0a0a0;"></div>
<div class="a" style="left:454px;top:763px;width:1px;height:21px;background:#ffffff;"></div>
<div class="a" style="left:455px;top:763px;width:1px;height:21px;background:#a0a0a0;"></div>
</body></html>
